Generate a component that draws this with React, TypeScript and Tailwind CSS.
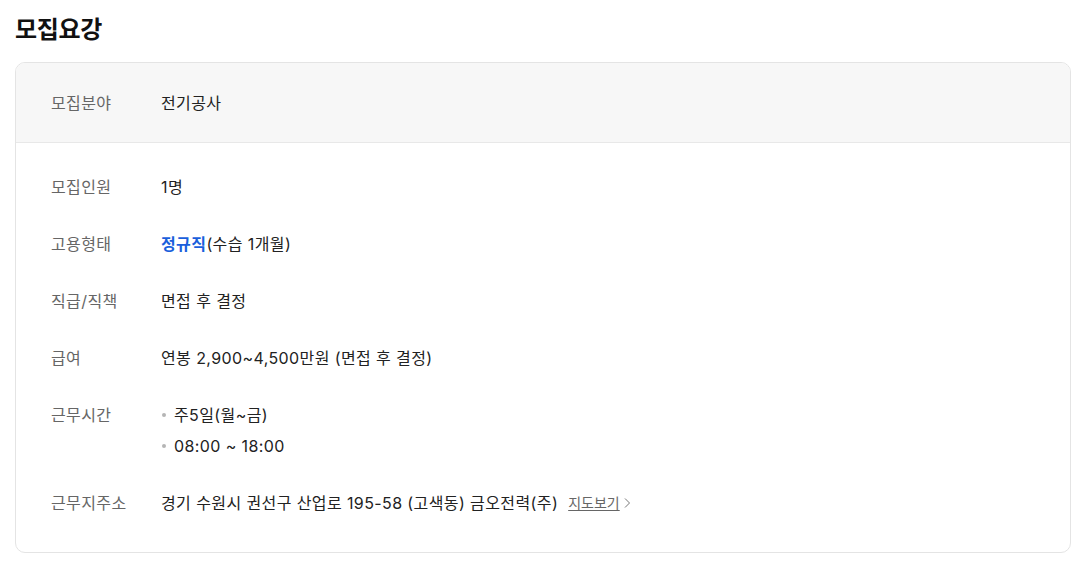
const font = { fontFamily: 'Inter, "Noto Sans CJK KR", sans-serif' };

type Row = { label: string; value: React.ReactNode };

function Bullets({ items }: { items: string[] }) {
  return (
    <ul className="flex flex-col gap-[7px]">
      {items.map((t) => (
        <li key={t} className="flex items-center h-6">
          <span className="w-[4px] h-[4px] rounded-full bg-[#b5b5b5] ml-[1px] mr-[8px]" />
          {t}
        </li>
      ))}
    </ul>
  );
}

const rows: Row[] = [
  { label: '모집인원', value: '1명' },
  {
    label: '고용형태',
    value: (
      <>
        <b className="font-bold text-[#1a5fdc]">정규직</b>(수습 1개월)
      </>
    ),
  },
  { label: '직급/직책', value: '면접 후 결정' },
  { label: '급여', value: '연봉 2,900~4,500만원 (면접 후 결정)' },
  { label: '근무시간', value: <Bullets items={['주5일(월~금)', '08:00 ~ 18:00']} /> },
  {
    label: '근무지주소',
    value: (
      <span className="flex items-center">
        경기 수원시 권선구 산업로 195-58 (고색동) 금오전력(주)
        <a className="ml-[10px] text-[14px] text-[#666] tracking-normal underline underline-offset-2 flex items-center">
          지도보기
        </a>
        <svg width="8" height="12" viewBox="0 0 8 12" className="ml-[3px]">
          <path d="M2 1.5l4.5 4.5-4.5 4.5" fill="none" stroke="#777" strokeWidth="1" />
        </svg>
      </span>
    ),
  },
];

export default function App() {
  return (
    <div className="bg-white w-[1081px] h-[562px] pl-[15px] pr-[10px] pt-[14px] text-[#222]" style={font}>
      <h2 className="text-[24px] font-bold leading-[32px] tracking-[-0.3px] text-[#111]">모집요강</h2>
      <div className="mt-[16px] border border-[#e4e4e4] rounded-[10px] overflow-hidden">
        <div className="bg-[#f7f7f7] h-[80px] border-b border-[#e8e8e8] flex items-center px-[35px] text-[16px] tracking-[0.4px]">
          <span className="w-[110px] text-[#666]">모집분야</span>
          <span>전기공사</span>
        </div>
        <div className="flex flex-col gap-[33px] px-[35px] pt-[32px] pb-[37px] text-[16px] leading-6 tracking-[0.4px]">
          {rows.map((r) => (
            <div key={r.label} className="flex">
              <span className="w-[110px] shrink-0 text-[#666]">{r.label}</span>
              <div>{r.value}</div>
            </div>
          ))}
        </div>
      </div>
    </div>
  );
}
